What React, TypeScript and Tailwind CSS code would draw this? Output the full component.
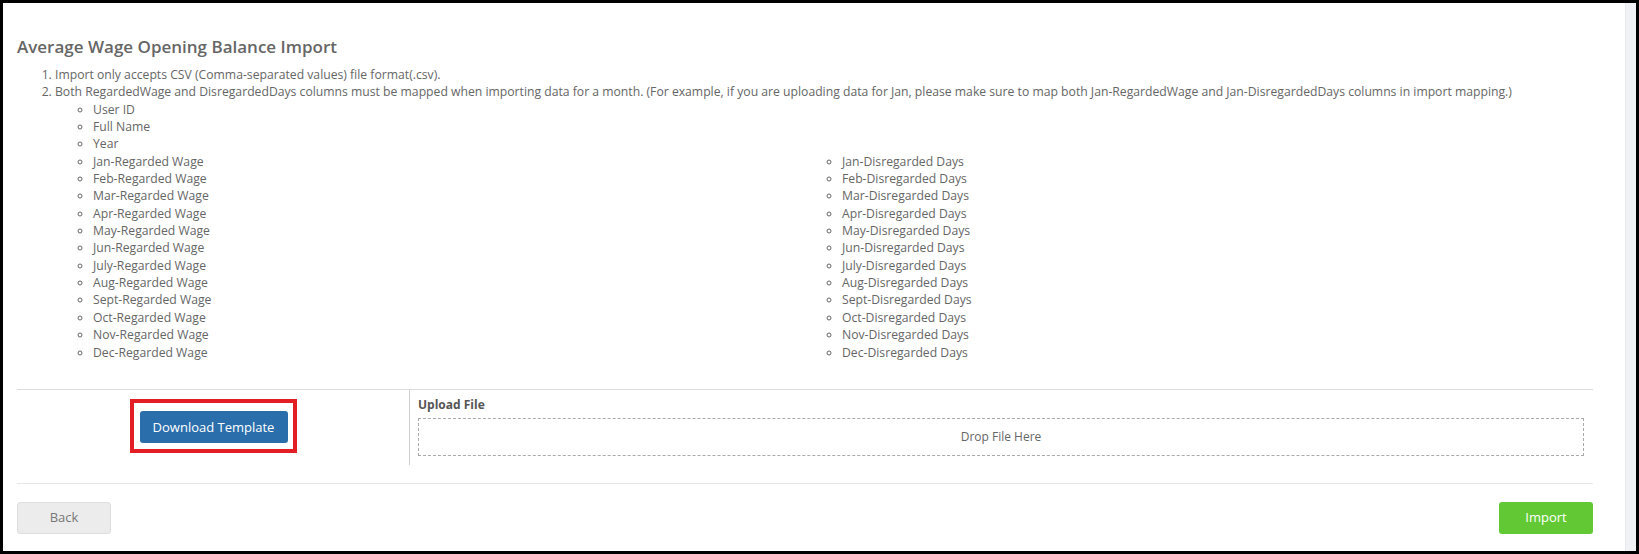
import React from 'react';

const months = ['Jan', 'Feb', 'Mar', 'Apr', 'May', 'Jun', 'July', 'Aug', 'Sept', 'Oct', 'Nov', 'Dec'];

const App: React.FC = () => {
  return (
    <div
      className="w-[1639px] h-[554px] border-[3px] border-black bg-white flex overflow-hidden"
      style={{ fontFamily: '"Open Sans", "Liberation Sans", sans-serif' }}
    >
      {/* Main panel */}
      <div className="flex-1 flex flex-col pl-[14px] pr-[32px] pt-[31px]">
        <h1 className="text-[17px] leading-[26px] font-semibold text-[#666]">
          Average Wage Opening Balance Import
        </h1>

        <ol className="mt-[6px] list-decimal pl-[38px] text-[12.2px] leading-[17.35px] text-[#666]">
          <li>Import only accepts CSV (Comma-separated values) file format(.csv).</li>
          <li>
            Both RegardedWage and DisregardedDays columns must be mapped when importing data for a month. (For example, if you are uploading data for Jan, please make sure to map both Jan-RegardedWage and Jan-DisregardedDays columns in import mapping.)
            <ul className="list-[circle] pl-[38px]">
              <li>User ID</li>
              <li>Full Name</li>
              <li>Year</li>
            </ul>
            <div className="flex pl-[38px]">
              <ul className="list-[circle] w-[749px]">
                {months.map((m) => (
                  <li key={m}>{m}-Regarded Wage</li>
                ))}
              </ul>
              <ul className="list-[circle]">
                {months.map((m) => (
                  <li key={m}>{m}-Disregarded Days</li>
                ))}
              </ul>
            </div>
          </li>
        </ol>

        {/* Template / upload row */}
        <div className="mt-[28px] border-t border-[#dcdcdc] flex h-[76px]">
          <div className="w-[393px] border-r border-[#cfcfcf] flex items-center justify-center">
            <div className="border-[4px] border-[#e31e24] pl-[6px] pr-[5px] pt-[8px] pb-[6px] translate-y-[-1px]">
              <button className="w-[148px] h-[32px] rounded-[3px] bg-[#2a6eab] text-white text-[13px]">
                Download Template
              </button>
            </div>
          </div>
          <div className="flex-1 pl-[8px] pr-[9px] pt-[6px]">
            <div className="text-[12px] leading-[17px] font-bold text-[#555]">Upload File</div>
            <div className="mt-[5px] h-[38px] border border-dashed border-[#aaa] flex items-center justify-center text-[12px] text-[#666]">
              Drop File Here
            </div>
          </div>
        </div>

        <div className="mt-[18px] border-t border-[#e6e6e6]" />

        {/* Footer buttons */}
        <div className="mt-[18px] flex justify-between">
          <button className="w-[94px] h-[32px] rounded-[3px] bg-[#ececec] border border-[#dedede] text-[13px] text-[#777]">
            Back
          </button>
          <button className="w-[94px] h-[32px] rounded-[3px] bg-[#62c934] text-[13px] text-white">
            Import
          </button>
        </div>
      </div>

      {/* Scrollbar track */}
      <div className="w-[11px] bg-[#f1f2f6] border-l border-[#e8e9ee]" />
    </div>
  );
};

export default App;
